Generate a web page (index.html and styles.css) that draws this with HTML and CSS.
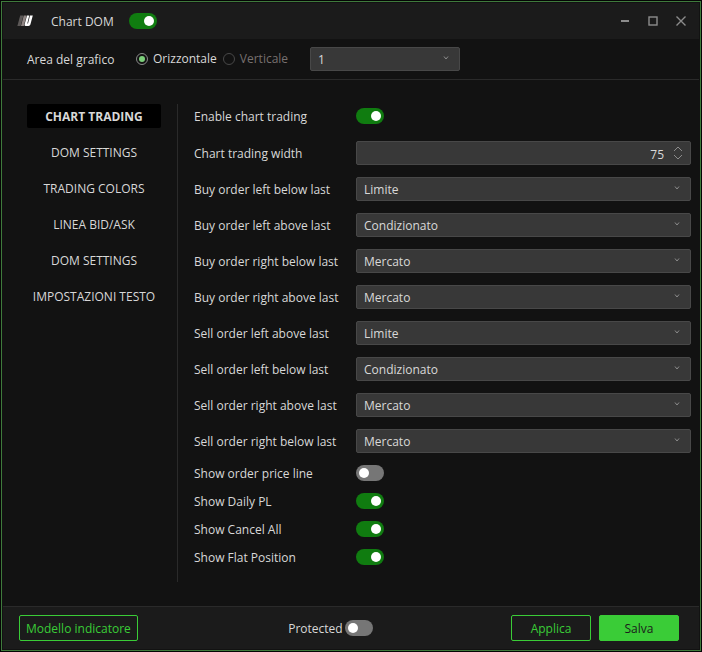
FILE: index.html
```html
<!DOCTYPE html>
<html lang="it">
<head>
    <meta charset="UTF-8">
    <meta name="viewport" content="width=device-width, initial-scale=1.0">
    <title>Chart DOM</title>
    <link rel="stylesheet" href="styles.css">
</head>
<body>
    <!-- Shared icons -->
    <svg class="sprite" aria-hidden="true">
        <symbol id="chevron" viewBox="0 0 8 8">
            <path d="M2 2.5 L4 5 L6 2.5" />
        </symbol>
    </svg>

    <div class="window">
        <!-- Title bar -->
        <header class="titlebar">
            <svg class="logo" viewBox="0 0 16 12" aria-hidden="true">
                <path fill="#5c5857" d="M3.2 0.5 H6.4 L3.6 11 H0.4 Z" />
                <path fill="#8f8583" d="M6.8 0.5 H9.6 L6.8 11 H4 Z" />
                <path fill="#ffffff" fill-rule="evenodd" d="M10 0.5 H15.8 L13.4 9.6 Q13 11 11.5 11 H8.8 Q7.2 11 7.6 9.4 Z M12.3 0.5 L10.3 8.6 H11 L13 0.5 Z" />
            </svg>
            <h1>Chart DOM</h1>
            <input class="switch" type="checkbox" aria-label="Chart DOM" checked>
            <div class="window-buttons">
                <button type="button" aria-label="Minimize">
                    <svg viewBox="0 0 12 12"><path d="M2 6 H10" stroke-width="2" /></svg>
                </button>
                <button type="button" aria-label="Maximize">
                    <svg viewBox="0 0 12 12"><rect x="2" y="2" width="8" height="8" stroke-width="1.4" /></svg>
                </button>
                <button type="button" aria-label="Close">
                    <svg viewBox="0 0 12 12"><path d="M1.5 1.5 L10.5 10.5 M10.5 1.5 L1.5 10.5" stroke-width="1.4" /></svg>
                </button>
            </div>
        </header>

        <!-- Chart area -->
        <div class="toolbar">
            <span class="toolbar-label" id="areaLabel">Area del grafico</span>
            <div class="radios" role="radiogroup" aria-labelledby="areaLabel">
                <label class="radio"><input type="radio" name="area" checked>Orizzontale</label>
                <label class="radio off"><input type="radio" name="area" disabled>Verticale</label>
            </div>
            <div class="field area-number">
                <select aria-label="Area"><option>1</option></select>
                <svg class="arrow"><use href="#chevron" /></svg>
            </div>
        </div>

        <main class="main">
            <nav class="sidebar">
                <a class="active" href="#trading">CHART TRADING</a>
                <a href="#dom">DOM SETTINGS</a>
                <a href="#colors">TRADING COLORS</a>
                <a href="#bidask">LINEA BID/ASK</a>
                <a href="#dom2">DOM SETTINGS</a>
                <a href="#text">IMPOSTAZIONI TESTO</a>
            </nav>

            <form class="settings" id="trading">
                <div class="row first">
                    <label for="enable">Enable chart trading</label>
                    <input class="switch" type="checkbox" id="enable" checked>
                </div>
                <div class="row">
                    <label for="width">Chart trading width</label>
                    <div class="field">
                        <input class="number" type="number" id="width" value="75">
                        <svg class="spinner" viewBox="0 0 10 14"><path d="M1 5 L5 1 L9 5 M1 9 L5 13 L9 9" /></svg>
                    </div>
                </div>
                <div class="row">
                    <label for="buyLeftBelow">Buy order left below last</label>
                    <div class="field">
                        <select id="buyLeftBelow"><option selected>Limite</option><option>Condizionato</option><option>Mercato</option></select>
                        <svg class="arrow"><use href="#chevron" /></svg>
                    </div>
                </div>
                <div class="row">
                    <label for="buyLeftAbove">Buy order left above last</label>
                    <div class="field">
                        <select id="buyLeftAbove"><option>Limite</option><option selected>Condizionato</option><option>Mercato</option></select>
                        <svg class="arrow"><use href="#chevron" /></svg>
                    </div>
                </div>
                <div class="row">
                    <label for="buyRightBelow">Buy order right below last</label>
                    <div class="field">
                        <select id="buyRightBelow"><option>Limite</option><option>Condizionato</option><option selected>Mercato</option></select>
                        <svg class="arrow"><use href="#chevron" /></svg>
                    </div>
                </div>
                <div class="row">
                    <label for="buyRightAbove">Buy order right above last</label>
                    <div class="field">
                        <select id="buyRightAbove"><option>Limite</option><option>Condizionato</option><option selected>Mercato</option></select>
                        <svg class="arrow"><use href="#chevron" /></svg>
                    </div>
                </div>
                <div class="row">
                    <label for="sellLeftAbove">Sell order left above last</label>
                    <div class="field">
                        <select id="sellLeftAbove"><option selected>Limite</option><option>Condizionato</option><option>Mercato</option></select>
                        <svg class="arrow"><use href="#chevron" /></svg>
                    </div>
                </div>
                <div class="row">
                    <label for="sellLeftBelow">Sell order left below last</label>
                    <div class="field">
                        <select id="sellLeftBelow"><option>Limite</option><option selected>Condizionato</option><option>Mercato</option></select>
                        <svg class="arrow"><use href="#chevron" /></svg>
                    </div>
                </div>
                <div class="row">
                    <label for="sellRightAbove">Sell order right above last</label>
                    <div class="field">
                        <select id="sellRightAbove"><option>Limite</option><option>Condizionato</option><option selected>Mercato</option></select>
                        <svg class="arrow"><use href="#chevron" /></svg>
                    </div>
                </div>
                <div class="row">
                    <label for="sellRightBelow">Sell order right below last</label>
                    <div class="field">
                        <select id="sellRightBelow"><option>Limite</option><option>Condizionato</option><option selected>Mercato</option></select>
                        <svg class="arrow"><use href="#chevron" /></svg>
                    </div>
                </div>
                <div class="row short">
                    <label for="priceLine">Show order price line</label>
                    <input class="switch" type="checkbox" id="priceLine">
                </div>
                <div class="row short">
                    <label for="dailyPl">Show Daily PL</label>
                    <input class="switch" type="checkbox" id="dailyPl" checked>
                </div>
                <div class="row short">
                    <label for="cancelAll">Show Cancel All</label>
                    <input class="switch" type="checkbox" id="cancelAll" checked>
                </div>
                <div class="row short">
                    <label for="flatPosition">Show Flat Position</label>
                    <input class="switch" type="checkbox" id="flatPosition" checked>
                </div>
            </form>
        </main>

        <footer class="footer">
            <button class="btn" type="button">Modello indicatore</button>
            <label class="protected"><span>Protected</span> <input class="switch" type="checkbox"></label>
            <div class="actions">
                <button class="btn" type="button">Applica</button>
                <button class="btn primary" type="button">Salva</button>
            </div>
        </footer>
    </div>
</body>
</html>
```
FILE: styles.css
```css
/* General Styles */
* {
    box-sizing: border-box;
}
body {
    margin: 0;
    background: #050505;
    color: #d8d8d8;
    font-family: "Segoe UI", "Open Sans", "Noto Sans", sans-serif;
    font-size: 12px;
    line-height: 16px;
}
button, input, select {
    font: inherit;
    color: inherit;
    margin: 0;
}
svg {
    fill: none;
    stroke: #8c8c8c;
}
.sprite {
    display: none;
}
.window {
    display: flex;
    flex-direction: column;
    min-height: calc(100vh - 2px);
    margin: 1px;
    padding: 1px;
    border: 1px solid #3f7a3c;
    background: #121212;
}

/* Title Bar */
.titlebar {
    display: flex;
    align-items: center;
    height: 36px;
    padding: 0 9px 0 14px;
    background: #1b1b1b;
}
.logo {
    width: 16px;
    height: 12px;
    stroke: none;
}
h1 {
    margin: 0 15px 0 18px;
    padding-top: 2px;
    font-size: 12px;
    font-weight: normal;
}
.window-buttons {
    display: flex;
    gap: 10px;
    margin-left: auto;
}
.window-buttons button {
    display: flex;
    padding: 3px;
    border: 0;
    background: none;
}
.window-buttons svg {
    width: 12px;
    height: 12px;
}

/* Switch */
.switch {
    appearance: none;
    flex: none;
    display: flex;
    align-items: center;
    width: 28px;
    height: 16px;
    padding: 0 3px;
    border-radius: 8px;
    background: #767676;
}
.switch::before {
    content: "";
    width: 10px;
    height: 10px;
    border-radius: 50%;
    background: #fff;
}
.switch:checked {
    justify-content: flex-end;
    background: #107c10;
}

/* Toolbar */
.toolbar {
    display: flex;
    align-items: center;
    height: 41px;
    padding-left: 24px;
    border-bottom: 1px solid #2a2a2a;
}
.toolbar-label {
    width: 109px;
    padding-top: 2px;
}
.radios {
    display: flex;
    width: 174px;
    gap: 6px;
}
.radio {
    display: flex;
    align-items: center;
    gap: 5px;
}
.radio input {
    appearance: none;
    display: grid;
    place-items: center;
    width: 12px;
    height: 12px;
    border: 1px solid #8a8a8a;
    border-radius: 50%;
}
.radio input:checked::before {
    content: "";
    width: 6px;
    height: 6px;
    border-radius: 50%;
    background: #7ccf7a;
}
.radio.off {
    color: #77706f;
}
.radio.off input {
    border-color: #484848;
}

/* Fields */
.field {
    position: relative;
    flex: 1;
}
.field select,
.field .number {
    appearance: none;
    display: block;
    width: 100%;
    height: 24px;
    padding: 2px 7px 0;
    border: 1px solid #484848;
    border-radius: 2px;
    background: #383838;
}
.field .number {
    appearance: textfield;
    padding-right: 26px;
    text-align: right;
}
.number::-webkit-inner-spin-button {
    display: none;
}
.arrow {
    position: absolute;
    top: 7px;
    right: 10px;
    width: 8px;
    height: 8px;
    pointer-events: none;
}
.spinner {
    position: absolute;
    top: 5px;
    right: 8px;
    width: 10px;
    height: 14px;
    pointer-events: none;
}
.area-number {
    flex: 0 0 150px;
}

/* Main */
.main {
    flex: 1;
    display: flex;
    padding: 24px 8px 24px 24px;
}
.sidebar {
    display: flex;
    flex-direction: column;
    gap: 12px;
    width: 151px;
    padding-right: 16px;
    border-right: 1px solid #2a2a2a;
}
.sidebar a {
    height: 24px;
    border-radius: 2px;
    color: inherit;
    line-height: 26px;
    text-align: center;
    text-decoration: none;
    white-space: nowrap;
}
.sidebar .active {
    background: #000;
    font-weight: bold;
}
.settings {
    flex: 1;
    padding-left: 16px;
}
.row {
    display: flex;
    align-items: center;
    height: 36px;
}
.row label {
    flex: 0 0 162px;
    padding-top: 2px;
}
.row.first {
    height: 24px;
    margin-bottom: 7px;
}
.row.short {
    height: 28px;
}

/* Footer */
.footer {
    display: flex;
    align-items: center;
    justify-content: space-between;
    height: 43px;
    padding: 0 20px 0 16px;
    border-top: 1px solid #2a2a2a;
    background: #1b1b1b;
}
.protected {
    display: flex;
    align-items: center;
    gap: 2px;
    margin-left: 12px;
}
.protected span {
    padding-top: 2px;
}
.actions {
    display: flex;
    gap: 8px;
}
.btn {
    min-width: 80px;
    height: 26px;
    padding: 2px 6px 0;
    border: 1px solid #3acc37;
    border-radius: 2px;
    background: none;
    color: #3acc37;
}
.btn.primary {
    background: #3acc37;
    color: #1b1b1b;
}
```
